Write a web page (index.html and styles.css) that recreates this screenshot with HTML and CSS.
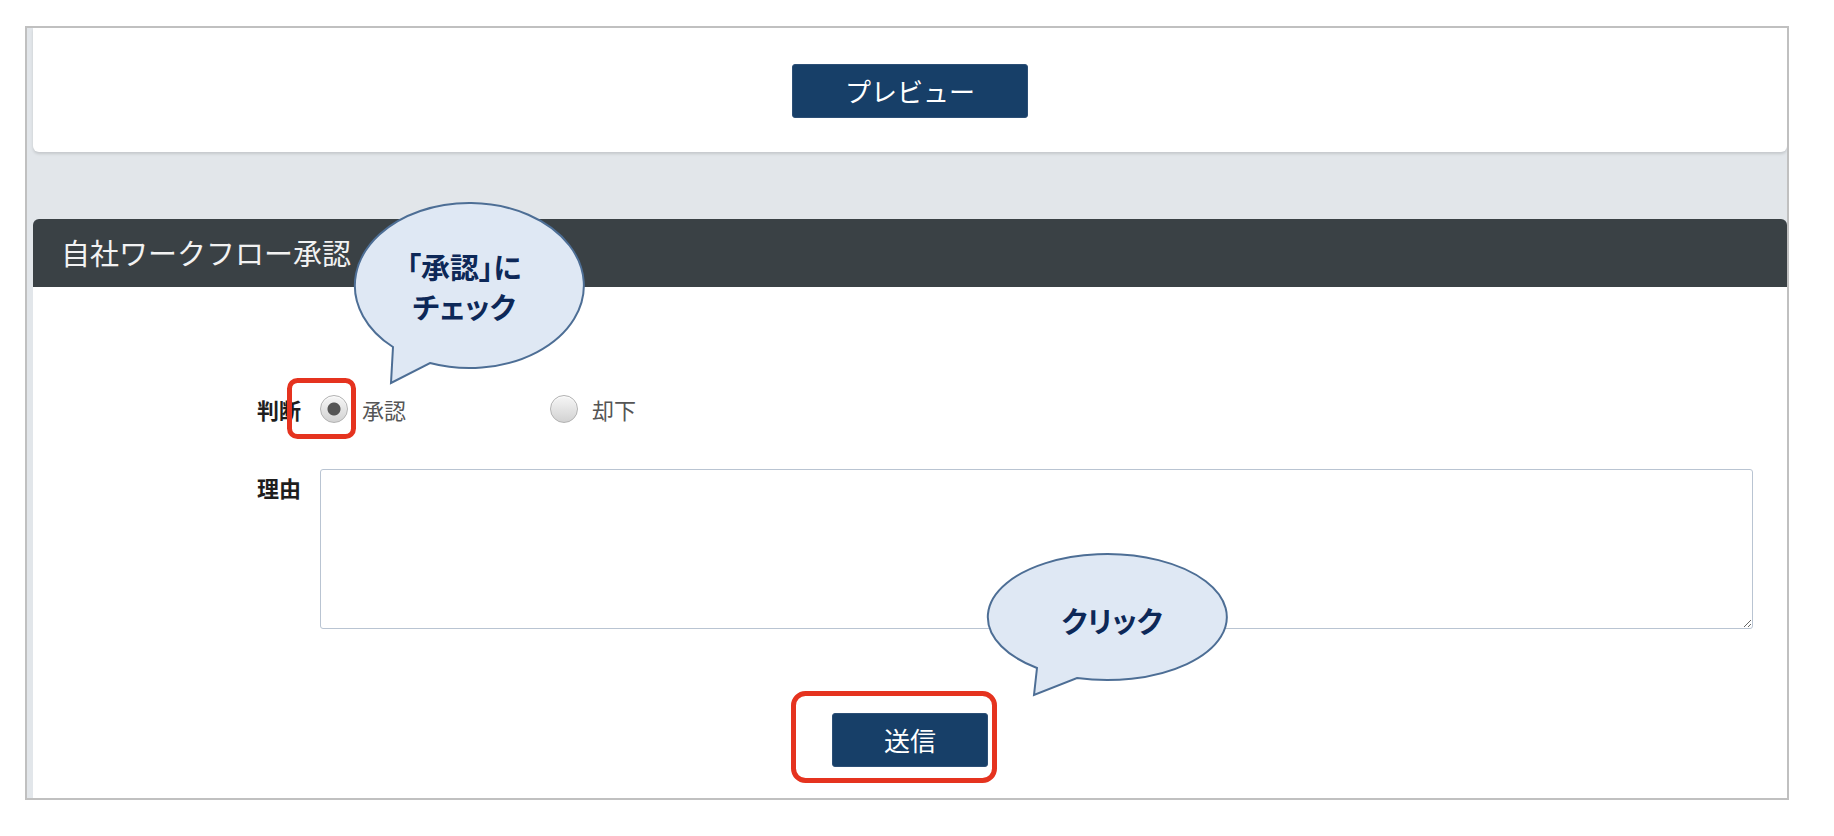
FILE: index.html
```html
<!DOCTYPE html>
<html lang="ja">
<head>
<meta charset="utf-8">
<title>自社ワークフロー承認</title>
<link rel="stylesheet" href="styles.css">
</head>
<body>
<div class="frame">
  <div class="top-card">
    <button class="btn btn-preview" type="button">プレビュー</button>
  </div>
  <section class="section">
    <div class="section-head">自社ワークフロー承認</div>
    <div class="section-body">
      <div class="form">
        <div class="row row-judge">
          <span class="label">判断</span>
          <label class="opt"><input type="radio" name="j" class="radio" checked><span>承認</span></label>
          <label class="opt"><input type="radio" name="j" class="radio"><span>却下</span></label>
        </div>
        <div class="row row-reason">
          <span class="label label-top">理由</span>
          <textarea class="textarea"></textarea>
        </div>
      </div>
      <div class="actions">
        <button class="btn btn-send" type="button">送信</button>
      </div>
    </div>
  </section>
</div>

<svg class="annot" width="1834" height="836" viewBox="0 0 1834 836" xmlns="http://www.w3.org/2000/svg">
  <path class="bubble" d="M 393 347 L 391 383 L 430 363 A 114.5 82.5 0 1 0 393 347 Z"/>
  <text class="btext" x="464" y="266">「承認」に</text>
  <text class="btext" x="464" y="306">チェック</text>
  <path class="bubble" d="M 1037 668 L 1034 695 L 1077 678 A 119.5 63 0 1 0 1037 668 Z"/>
  <text class="btext" x="1112" y="620">クリック</text>
  <rect class="redbox" x="289.5" y="380.5" width="64" height="56" rx="8"/>
  <rect class="redbox" x="793.5" y="693.5" width="201" height="87" rx="12"/>
</svg>
</body>
</html>
```
FILE: styles.css
```css
* { box-sizing: border-box; }
html, body { margin: 0; padding: 0; background: #fff; }
body {
  font-family: "Noto Sans CJK JP", "Noto Sans", "Liberation Sans", sans-serif;
  position: relative;
  width: 1834px;
  height: 836px;
  overflow: hidden;
}
.frame {
  margin: 26px 0 0 25px;
  width: 1764px;
  height: 774px;
  border: 2px solid #c0c0c0;
  background: #e2e6ea;
  padding-left: 6px;
  display: flex;
  flex-direction: column;
  overflow: hidden;
}
.top-card {
  height: 124px;
  flex: none;
  background: #fff;
  border-radius: 0 0 6px 6px;
  box-shadow: 0 2px 3px rgba(0, 0, 0, 0.13);
  display: flex;
  align-items: center;
  justify-content: center;
  padding-top: 2px;
}
.btn {
  font-family: inherit;
  background: #173f68;
  color: #fff;
  border: 1px solid #2c4f76;
  border-radius: 3px;
  font-size: 26px;
  line-height: 1;
  height: 54px;
  padding: 0;
  cursor: pointer;
}
.btn-preview { width: 236px; }
.btn-send { width: 156px; }
.section {
  margin-top: 67px;
  flex: 1;
  display: flex;
  flex-direction: column;
}
.section-head {
  height: 68px;
  flex: none;
  background: #3a4145;
  border-radius: 6px 6px 0 0;
  color: #f2f2f2;
  font-size: 29px;
  padding-left: 28px;
  display: flex;
  align-items: center;
  padding-bottom: 2px;
}
.section-body {
  flex: 1;
  background: #fff;
  padding-top: 102px;
}
.form {
  padding: 0 34px 0 224px;
}
.row {
  display: flex;
  align-items: center;
}
.row-judge { height: 40px; }
.label {
  width: 46px;
  margin-right: 17px;
  font-weight: bold;
  font-size: 22px;
  line-height: 30px;
  color: #1e1e1e;
  flex: none;
}
.opt {
  width: 230px;
  display: flex;
  align-items: center;
  gap: 14px;
  font-size: 22px;
  color: #555;
  line-height: 30px;
}
.radio {
  -webkit-appearance: none;
  appearance: none;
  width: 28px;
  height: 28px;
  margin: 0;
  border-radius: 50%;
  border: 1px solid #b2b2b2;
  background: linear-gradient(#f6f6f6, #d2d2d2);
  box-shadow: inset 0 1px 1px rgba(255,255,255,0.8);
  flex: none;
}
.radio:checked {
  background: radial-gradient(circle, #555 0 6px, rgba(85,85,85,0) 7px), linear-gradient(#f6f6f6, #d2d2d2);
}
.row-reason {
  margin-top: 40px;
  align-items: flex-start;
}
.label-top { padding-top: 3px; }
.textarea {
  flex: 1;
  height: 160px;
  border: 1px solid #b9c4d2;
  border-radius: 3px;
  font-family: inherit;
  font-size: 20px;
  padding: 6px 10px;
  resize: both;
  outline: none;
}
.actions {
  margin-top: 84px;
  display: flex;
  justify-content: center;
}
.annot {
  position: absolute;
  left: 0;
  top: 0;
  pointer-events: none;
}
.bubble {
  fill: #dfe8f4;
  stroke: #4d6e95;
  stroke-width: 2;
}
.btext {
  font-family: "Noto Sans CJK JP", "Noto Sans", sans-serif;
  font-weight: bold;
  font-size: 29px;
  font-feature-settings: "palt" 1;
  fill: #0d2858;
  text-anchor: middle;
  dominant-baseline: central;
}
.redbox {
  fill: none;
  stroke: #e5331f;
  stroke-width: 5;
}
```
